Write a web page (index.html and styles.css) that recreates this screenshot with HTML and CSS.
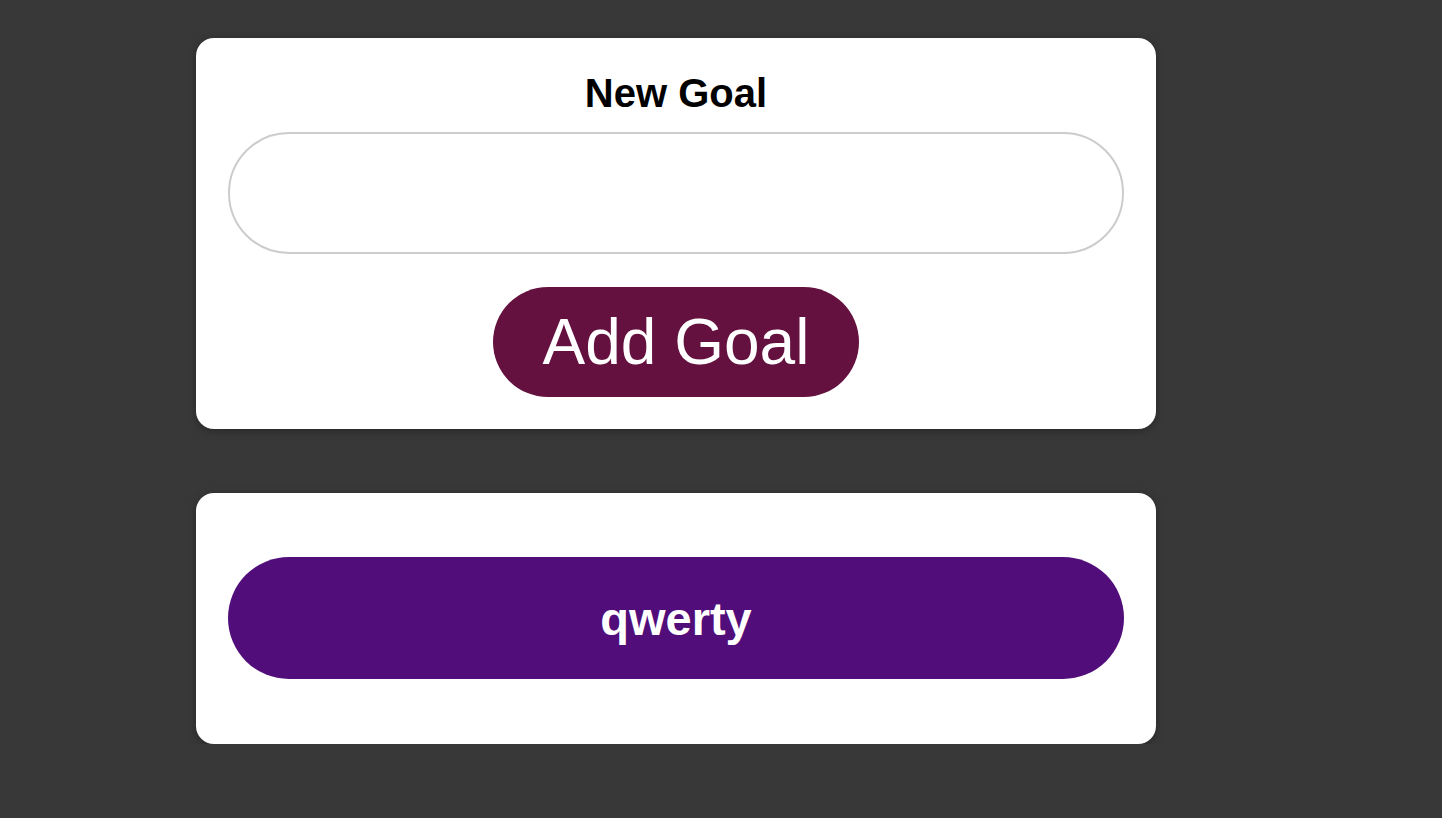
FILE: index.html
```html
<!DOCTYPE html>
<html lang="en">
<head>
<meta charset="utf-8">
<title>Goals</title>
<link rel="stylesheet" href="styles.css">
</head>
<body>
  <main class="page">
    <section class="card form-card">
      <label class="title" for="goal">New Goal</label>
      <input class="goal-input" id="goal" type="text">
      <button class="add-btn" type="button">Add Goal</button>
    </section>
    <section class="card list-card">
      <ul class="goal-list">
        <li class="goal-item">qwerty</li>
      </ul>
    </section>
  </main>
</body>
</html>
```

FILE: styles.css
```css
html, body {
  margin: 0;
  padding: 0;
  background: #383838;
  font-family: "Liberation Sans", Arial, Helvetica, sans-serif;
}

.page {
  display: flex;
  flex-direction: column;
  gap: 64px;
  width: 960px;
  margin: 38px 0 0 196px;
}

.card {
  background: #ffffff;
  border-radius: 18px;
  box-shadow: 0 2px 8px rgba(0, 0, 0, 0.3);
  box-sizing: border-box;
}

.form-card {
  display: flex;
  flex-direction: column;
  align-items: center;
  padding: 32px 32px 32px;
}

.title {
  display: block;
  font-size: 40px;
  font-weight: bold;
  line-height: 46px;
  color: #000;
  margin-bottom: 16px;
}

.goal-input {
  display: block;
  width: 100%;
  height: 122px;
  box-sizing: border-box;
  border: 2px solid #cccccc;
  border-radius: 61px;
  background: #fff;
  padding: 0 40px;
  font: inherit;
  font-size: 40px;
  outline: none;
}

.add-btn {
  margin-top: 33px;
  border: none;
  border-radius: 55px;
  background: #64113f;
  color: #ffffff;
  font-family: "Liberation Sans", Arial, Helvetica, sans-serif;
  font-size: 64px;
  line-height: 74px;
  padding: 18px 50px 18px;
  cursor: pointer;
}

.list-card {
  padding: 32px 32px 33px;
}

.goal-list {
  list-style: none;
  margin: 32px 0;
  padding: 0;
}

.goal-item {
  display: flex;
  align-items: center;
  justify-content: center;
  height: 122px;
  border-radius: 61px;
  background: #510d79;
  color: #ffffff;
  font-size: 47px;
  font-weight: bold;
}
```
